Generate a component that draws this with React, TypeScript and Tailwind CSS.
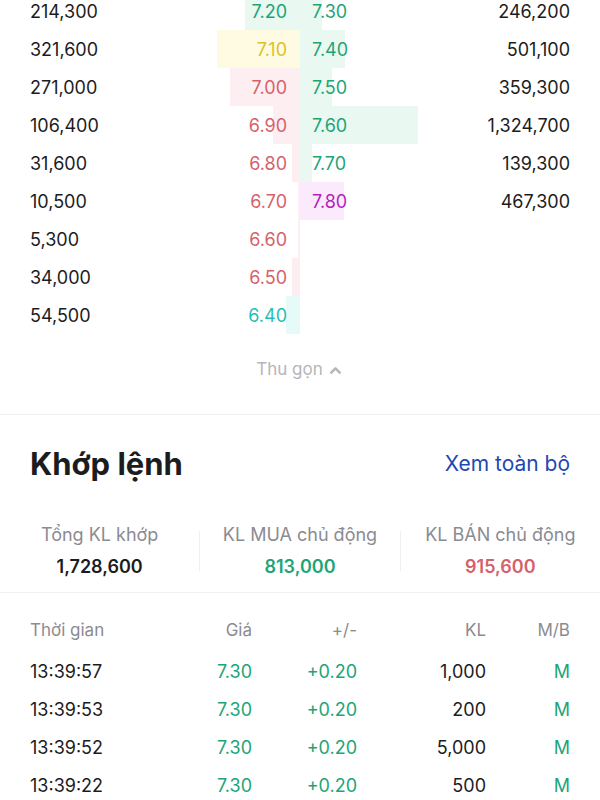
import React from "react";
import { ChevronUp } from "lucide-react";

type Level = {
  bidVol: string;
  bid: string;
  bidColor: string;
  bidBar: string;
  bidW: number;
  ask?: string;
  askColor?: string;
  askBar?: string;
  askW?: number;
  askVol?: string;
};

const GREEN = "text-[#1ea477]";
const RED = "text-[#d6616b]";

const levels: Level[] = [
  { bidVol: "214,300", bid: "7.20", bidColor: GREEN, bidBar: "bg-[#e9f8f1]", bidW: 55, ask: "7.30", askColor: GREEN, askBar: "bg-[#e9f8f1]", askW: 22, askVol: "246,200" },
  { bidVol: "321,600", bid: "7.10", bidColor: "text-[#dcc225]", bidBar: "bg-[#fffbe3]", bidW: 83, ask: "7.40", askColor: GREEN, askBar: "bg-[#e9f8f1]", askW: 45, askVol: "501,100" },
  { bidVol: "271,000", bid: "7.00", bidColor: RED, bidBar: "bg-[#fdeff1]", bidW: 70, ask: "7.50", askColor: GREEN, askBar: "bg-[#e9f8f1]", askW: 32, askVol: "359,300" },
  { bidVol: "106,400", bid: "6.90", bidColor: RED, bidBar: "bg-[#fdeff1]", bidW: 27, ask: "7.60", askColor: GREEN, askBar: "bg-[#e9f8f1]", askW: 118, askVol: "1,324,700" },
  { bidVol: "31,600", bid: "6.80", bidColor: RED, bidBar: "bg-[#fdeff1]", bidW: 8, ask: "7.70", askColor: GREEN, askBar: "bg-[#e9f8f1]", askW: 12, askVol: "139,300" },
  { bidVol: "10,500", bid: "6.70", bidColor: RED, bidBar: "bg-[#fdeff1]", bidW: 2, ask: "7.80", askColor: "text-[#b41fbd]", askBar: "bg-[#fbeafb]", askW: 44, askVol: "467,300" },
  { bidVol: "5,300", bid: "6.60", bidColor: RED, bidBar: "bg-[#fdeff1]", bidW: 2 },
  { bidVol: "34,000", bid: "6.50", bidColor: RED, bidBar: "bg-[#fdeff1]", bidW: 8 },
  { bidVol: "54,500", bid: "6.40", bidColor: "text-[#1fbfb5]", bidBar: "bg-[#e6faf8]", bidW: 14 },
];

const trades = [
  { t: "13:39:57", kl: "1,000" },
  { t: "13:39:53", kl: "200" },
  { t: "13:39:52", kl: "5,000" },
  { t: "13:39:22", kl: "500" },
];

const App = () => {
  return (
    <div
      className="w-[600px] h-[800px] overflow-hidden bg-white text-[#1c1c1e] text-[18px]"
      style={{ fontFamily: "Inter, 'Noto Sans', sans-serif" }}
    >
      {/* order book */}
      <div className="-mt-[8px]">
        {levels.map((l, i) => (
          <div key={i} className="flex h-[38px]">
            <div className="relative w-1/2 flex items-center justify-between pl-[30px] pr-[13px]">
              <div className={`absolute right-0 top-0 bottom-0 ${l.bidBar}`} style={{ width: l.bidW }} />
              <span className="relative">{l.bidVol}</span>
              <span className={`relative ${l.bidColor}`}>{l.bid}</span>
            </div>
            <div className="relative w-1/2 flex items-center justify-between pl-[12px] pr-[30px]">
              {l.ask && (
                <div className={`absolute left-0 top-0 bottom-0 ${l.askBar}`} style={{ width: l.askW }} />
              )}
              <span className={`relative ${l.askColor ?? ""}`}>{l.ask}</span>
              <span className="relative">{l.askVol}</span>
            </div>
          </div>
        ))}
      </div>

      <div className="h-[80px] pt-[26px] flex justify-center">
        <button className="h-[20px] flex items-center gap-1 text-[17px] text-[#b5b5bb]">
          Thu gọn
          <ChevronUp size={17} strokeWidth={3.5} />
        </button>
      </div>
      <div className="h-px bg-[#f0f0f2]" />

      {/* matched orders */}
      <div className="flex items-center justify-between px-[30px] pt-[31px]">
        <h2 className="text-[31px] leading-[36px] font-bold text-[#1c1c1e]">Khớp lệnh</h2>
        <a className="text-[21px] text-[#1f48b3]">Xem toàn bộ</a>
      </div>

      <div className="flex items-center mt-[41px] pb-[13px] border-b border-[#f0f0f2]">
        <div className="flex-1 flex flex-col items-center gap-2">
          <span className="leading-[24px] text-[#8b8b92]">Tổng KL khớp</span>
          <span className="leading-[24px] font-semibold">1,728,600</span>
        </div>
        <div className="w-px h-[40px] bg-[#f0f0f2]" />
        <div className="flex-1 flex flex-col items-center gap-2">
          <span className="leading-[24px] text-[#8b8b92]">KL MUA chủ động</span>
          <span className={`leading-[24px] font-semibold ${GREEN}`}>813,000</span>
        </div>
        <div className="w-px h-[40px] bg-[#f0f0f2]" />
        <div className="flex-1 flex flex-col items-center gap-2">
          <span className="leading-[24px] text-[#8b8b92]">KL BÁN chủ động</span>
          <span className={`leading-[24px] font-semibold ${RED}`}>915,600</span>
        </div>
      </div>

      <div className="px-[30px] pt-[25px]">
        <div className="grid grid-cols-[130px_92px_105px_129px_84px] h-[22px] items-center text-[17px] text-[#8b8b92]">
          <span>Thời gian</span>
          <span className="text-right">Giá</span>
          <span className="text-right">+/-</span>
          <span className="text-right">KL</span>
          <span className="text-right">M/B</span>
        </div>
        <div className="mt-[12px]">
          {trades.map((r) => (
            <div key={r.t} className="grid grid-cols-[130px_92px_105px_129px_84px] h-[38px] items-center">
              <span>{r.t}</span>
              <span className={`text-right ${GREEN}`}>7.30</span>
              <span className={`text-right ${GREEN}`}>+0.20</span>
              <span className="text-right">{r.kl}</span>
              <span className={`text-right ${GREEN}`}>M</span>
            </div>
          ))}
        </div>
      </div>
    </div>
  );
};

export default App;
